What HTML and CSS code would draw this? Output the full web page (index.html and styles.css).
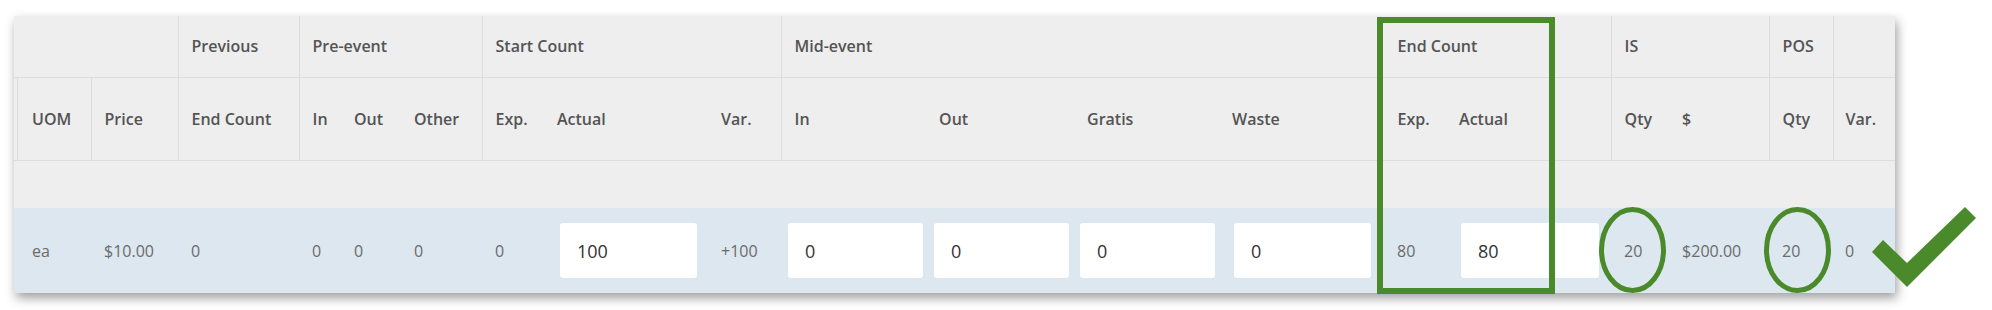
FILE: index.html
```html
<!DOCTYPE html>
<html lang="en">
<head>
<meta charset="utf-8">
<title>Count sheet</title>
<link rel="stylesheet" href="styles.css">
</head>
<body>
<div class="stage">
  <table class="count">
    <colgroup>
      <col class="w77"><col class="w87"><col class="w121"><col class="w42"><col class="w60"><col class="w81">
      <col class="w62"><col class="w164"><col class="w73">
      <col class="w146"><col class="w147"><col class="w146"><col class="w160">
      <col class="w66"><col class="w165"><col class="w58"><col class="w100"><col class="w64"><col class="w62">
    </colgroup>
    <thead>
      <tr class="r1">
        <th colspan="2"></th>
        <th class="bl">Previous</th>
        <th class="bl" colspan="3">Pre-event</th>
        <th class="bl" colspan="3">Start Count</th>
        <th class="bl" colspan="4">Mid-event</th>
        <th class="bl pe" colspan="2">End Count</th>
        <th class="bl" colspan="2">IS</th>
        <th class="bl">POS</th>
        <th class="bl"></th>
      </tr>
      <tr class="r2">
        <th class="first edge">UOM</th>
        <th class="bl">Price</th>
        <th class="bl">End Count</th>
        <th class="bl">In</th>
        <th>Out</th>
        <th>Other</th>
        <th class="bl">Exp.</th>
        <th>Actual</th>
        <th>Var.</th>
        <th class="bl">In</th>
        <th class="p12">Out</th>
        <th>Gratis</th>
        <th class="p12">Waste</th>
        <th class="bl pe">Exp.</th>
        <th>Actual</th>
        <th class="bl">Qty</th>
        <th>$</th>
        <th class="bl">Qty</th>
        <th class="bl p12">Var.</th>
      </tr>
    </thead>
    <tbody>
      <tr class="spacer"><td colspan="19"></td></tr>
      <tr class="data">
        <td class="first">ea</td>
        <td>$10.00</td>
        <td>0</td>
        <td>0</td>
        <td>0</td>
        <td>0</td>
        <td>0</td>
        <td class="in-cell i16"><input class="field w137" type="text" value="100"></td>
        <td>+100</td>
        <td class="in-cell i7"><input class="field w135" type="text" value="0"></td>
        <td class="in-cell i7"><input class="field w135" type="text" value="0"></td>
        <td class="in-cell i6"><input class="field w135" type="text" value="0"></td>
        <td class="in-cell i14"><input class="field w137" type="text" value="0"></td>
        <td class="pe">80</td>
        <td class="in-cell i15"><input class="field w138" type="text" value="80"></td>
        <td>20</td>
        <td>$200.00</td>
        <td>20</td>
        <td class="p12">0</td>
      </tr>
    </tbody>
  </table>

  <svg class="marks" width="1992" height="310" viewBox="0 0 1992 310" aria-hidden="true">
    <rect x="1380" y="20" width="172" height="271" fill="none" stroke="#4a8a2b" stroke-width="6"/>
    <ellipse cx="1632.5" cy="250" rx="31" ry="40.5" fill="none" stroke="#4a8a2b" stroke-width="5"/>
    <ellipse cx="1797.5" cy="250" rx="31" ry="40.5" fill="none" stroke="#4a8a2b" stroke-width="5"/>
    <polygon points="1883,240 1907,263 1965,207 1976,218 1907,287 1872,252" fill="#4a8a2b"/>
  </svg>
</div>
</body>
</html>
```

FILE: styles.css
```css
* { box-sizing: border-box; }

html, body {
  margin: 0;
  padding: 0;
  background: #ffffff;
}

body {
  font-family: "Open Sans", "Liberation Sans", sans-serif;
  width: 1992px;
  height: 310px;
  overflow: hidden;
}

.stage {
  position: relative;
  width: 1992px;
  height: 310px;
  padding: 16px 0 0 14px;
}

.count {
  width: 1881px;
  table-layout: fixed;
  border-collapse: collapse;
  border-spacing: 0;
  background: #eeeeee;
  box-shadow: 2px 5px 10px rgba(0, 0, 0, 0.38);
}

.w42 { width: 42px; }
.w58 { width: 58px; }
.w60 { width: 60px; }
.w62 { width: 62px; }
.w64 { width: 64px; }
.w66 { width: 66px; }
.w73 { width: 73px; }
.w77 { width: 77px; }
.w81 { width: 81px; }
.w87 { width: 87px; }
.w100 { width: 100px; }
.w121 { width: 121px; }
.w146 { width: 146px; }
.w147 { width: 147px; }
.w160 { width: 160px; }
.w164 { width: 164px; }
.w165 { width: 165px; }

.count th {
  text-align: left;
  font-weight: 600;
  font-size: 16px;
  color: #545454;
  padding: 0 0 0 13px;
  vertical-align: middle;
  white-space: nowrap;
}

.r1 th {
  height: 61px;
  border-bottom: 1px solid #dcdcdc;
}

.r2 th {
  height: 83px;
  border-bottom: 1px solid #dcdcdc;
}

.bl { border-left: 1px solid #dcdcdc; }

.count .first { padding-left: 18px; }
.count .p12 { padding-left: 12px; }
.count .pe { padding-left: 17px; }

.r2 .edge {
  background: linear-gradient(to right, transparent 3px, #dcdcdc 3px, #dcdcdc 4px, transparent 4px);
}

.spacer td {
  height: 48px;
  padding: 0;
  background: #eeeeee;
}

.data td {
  height: 85px;
  background: #dce7ef;
  font-size: 16px;
  color: #6b6b6b;
  padding: 0 0 0 13px;
  vertical-align: middle;
  white-space: nowrap;
}

.data .in-cell { padding-left: 0; }
.data .i6 { padding-left: 6px; }
.data .i7 { padding-left: 7px; }
.data .i14 { padding-left: 14px; }
.data .i15 { padding-left: 15px; }
.data .i16 { padding-left: 16px; }

.field {
  display: block;
  height: 55px;
  border: none;
  border-radius: 3px;
  background: #ffffff;
  font-family: "Open Sans", "Liberation Sans", sans-serif;
  font-size: 18px;
  color: #333333;
  padding: 0 0 0 17px;
  margin: 0;
  outline: none;
}

.w135 { width: 135px; }
.w137 { width: 137px; }
.w138 { width: 138px; }

.marks {
  position: absolute;
  left: 0;
  top: 0;
  pointer-events: none;
}
```
